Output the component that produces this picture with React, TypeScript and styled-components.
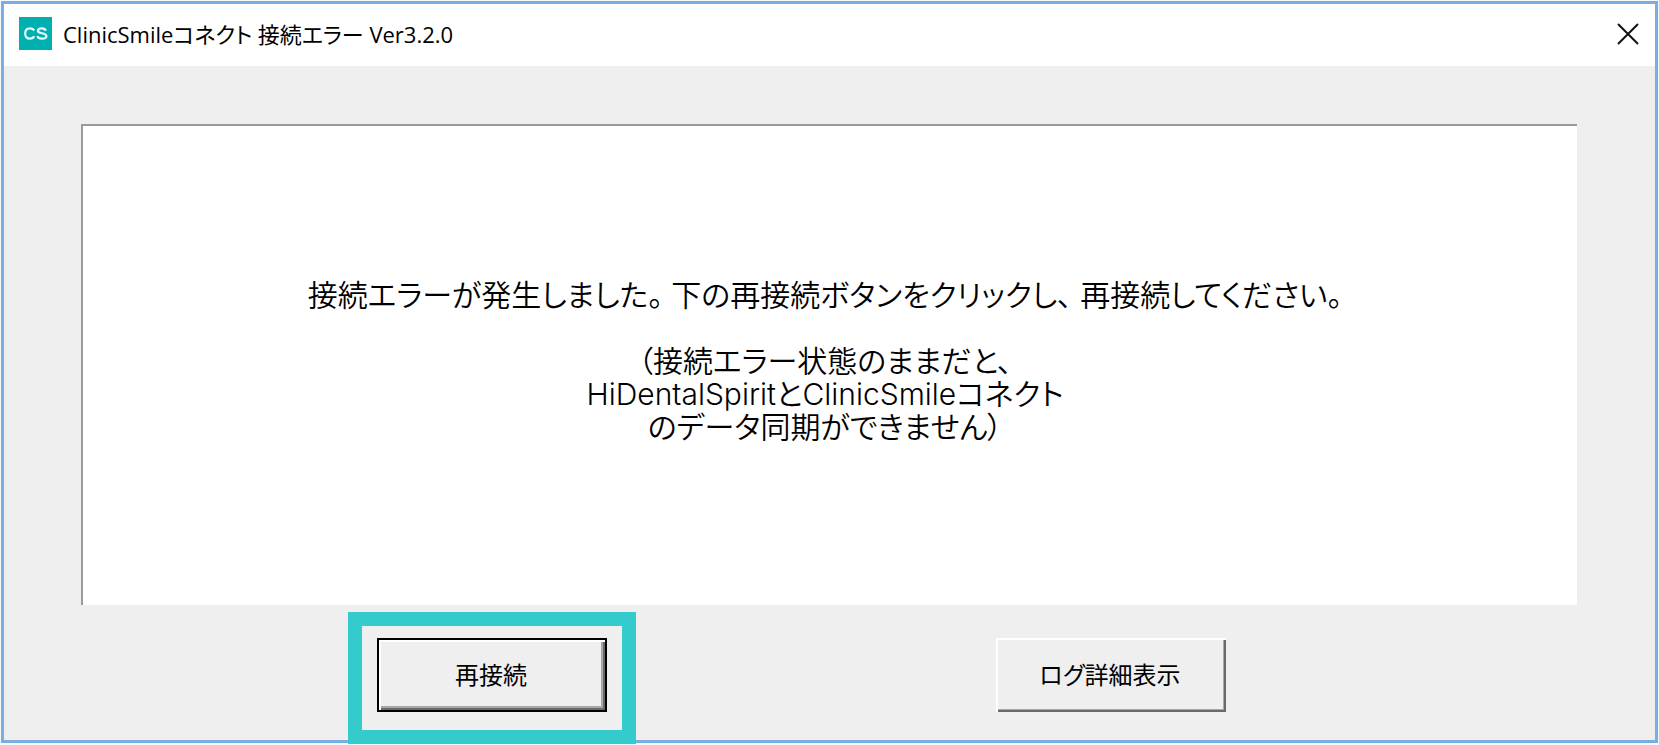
import React from "react";
import styled, { createGlobalStyle } from "styled-components";

const GlobalStyle = createGlobalStyle`
  *, *::before, *::after { box-sizing: border-box; }
  body { margin: 0; background: #ffffff; }
`;

const Page = styled.div`
  display: flex;
  min-height: 100vh;
  padding: 1px 1px 2px;
  background: #f4f8fc;
`;

const Dialog = styled.main`
  flex: 1;
  display: flex;
  flex-direction: column;
  border: 3px solid #7aaee0;
  background: #efefef;
  color: #000000;
`;

const TitleBar = styled.header`
  display: flex;
  align-items: center;
  gap: 11px;
  height: 62px;
  padding: 0 16px 3px 15px;
  background: #ffffff;
`;

const AppIcon = styled.svg`
  flex: none;
  width: 33px;
  height: 33px;
`;

const Title = styled.h1`
  flex: 1;
  margin: 0;
  font: 400 22px/32px "Open Sans", "Noto Sans CJK JP", sans-serif;
  font-feature-settings: "palt";
`;

const CloseButton = styled.button`
  display: flex;
  padding: 0;
  border: 0;
  background: transparent;
`;

const Content = styled.div`
  flex: 1;
  display: flex;
  flex-direction: column;
  gap: 33px;
  padding: 58px 78px 28px 77px;
`;

const MessagePanel = styled.section`
  flex: 1;
  display: flex;
  flex-direction: column;
  align-items: center;
  justify-content: center;
  gap: 33px;
  padding: 0 10px 8px 0;
  border-top: 2px solid #9a9a9a;
  border-left: 2px solid #9a9a9a;
  background: #ffffff;
`;

const Message = styled.p`
  margin: 0;
  font: 350 30px/33px Inter, "Noto Sans CJK JP", sans-serif;
  font-feature-settings: "palt";
  text-align: center;
`;

const Phrase = styled.span`
  & + & {
    margin-left: 8px;
  }
`;

const Actions = styled.footer`
  display: flex;
  justify-content: space-between;
  padding: 0 351px 0 296px;
`;

const Highlight = styled.div`
  position: relative;

  &::after {
    content: "";
    position: absolute;
    inset: -26px -29px -32px;
    border: 14px solid #33cbcc;
    pointer-events: none;
  }
`;

const ActionButton = styled.button<{ $default?: boolean }>`
  width: 230px;
  height: 74px;
  padding: 0 2px 2px 0;
  border: ${(p) => (p.$default ? "2px solid #000000" : "0")};
  background: #efefef;
  box-shadow: ${(p) =>
    p.$default
      ? "inset 2px 2px #ffffff, inset -2px -2px #696969, inset -4px -4px #a8a8a8"
      : "inset 2px 2px #ffffff, inset -2px -2px #696969, inset -3px -3px #a8a8a8"};
  color: #000000;
  font: 400 24px/32px "Noto Sans CJK JP", sans-serif;
  font-feature-settings: "palt";
`;

export default function App() {
  return (
    <Page>
      <GlobalStyle />
      <Dialog>
        <TitleBar>
          <AppIcon viewBox="0 0 33 33" aria-hidden="true">
            <rect width="33" height="33" fill="#00afaf" />
            <g fill="none" stroke="#e4fafa" strokeWidth="2.2">
              <path d="M15.2 13.6C14.4 12 13 11.3 11 11.3C8 11.3 6.2 13.4 6.2 16.5C6.2 19.7 8 21.7 11 21.7C13 21.7 14.5 20.9 15.2 19.3" />
              <path d="M26.8 13.7C26.3 12 25 11.3 22.8 11.3C20.4 11.3 18.9 12.2 18.9 13.8C18.9 17.2 27.4 15.2 27.4 19C27.4 20.8 25.6 21.7 23.1 21.7C20.6 21.7 18.9 20.9 18.4 19" />
            </g>
          </AppIcon>
          <Title>ClinicSmileコネクト 接続エラー Ver3.2.0</Title>
          <CloseButton type="button" aria-label="閉じる">
            <svg width="22" height="22" viewBox="0 0 22 22" aria-hidden="true">
              <path d="M1 1L21 21M21 1L1 21" stroke="#111111" strokeWidth="2" />
            </svg>
          </CloseButton>
        </TitleBar>
        <Content>
          <MessagePanel>
            <Message>
              <Phrase>接続エラーが発生しました。</Phrase>
              <Phrase>下の再接続ボタンをクリックし、</Phrase>
              <Phrase>再接続してください。</Phrase>
            </Message>
            <Message>
              （接続エラー状態のままだと、
              <br />
              HiDentalSpiritとClinicSmileコネクト
              <br />
              のデータ同期ができません）
            </Message>
          </MessagePanel>
          <Actions>
            <Highlight>
              <ActionButton type="button" $default>
                再接続
              </ActionButton>
            </Highlight>
            <ActionButton type="button">ログ詳細表示</ActionButton>
          </Actions>
        </Content>
      </Dialog>
    </Page>
  );
}
